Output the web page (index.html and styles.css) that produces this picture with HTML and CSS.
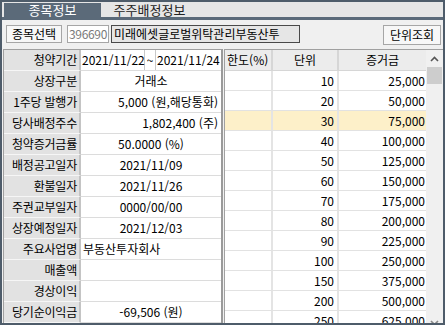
FILE: index.html
```html
<!DOCTYPE html>
<html lang="ko">
<head>
    <meta charset="UTF-8">
    <title>종목정보</title>
    <link rel="stylesheet" href="styles.css">
</head>
<body>
    <div class="window">
        <div class="tabs">
            <div class="tab active">종목정보</div>
            <div class="tab">주주배정정보</div>
        </div>

        <div class="content">
            <div class="toolbar">
                <button class="btn">종목선택</button>
                <div class="code-box">396690</div>
                <div class="name-box">미래에셋글로벌위탁관리부동산투</div>
                <div class="spacer"></div>
                <button class="btn btn-unit">단위조회</button>
            </div>

            <div class="panes">
                <div class="info">
                    <div class="label">청약기간</div>
                    <div class="value period">
                        <span class="left">2021/11/22</span>
                        <span class="tilde">~</span>
                        <span class="left">2021/11/24</span>
                    </div>
                    <div class="label">상장구분</div>
                    <div class="value center">거래소</div>
                    <div class="label">1주당 발행가</div>
                    <div class="value right">5,000 (원,해당통화)</div>
                    <div class="label">당사배정주수</div>
                    <div class="value right">1,802,400 (주)</div>
                    <div class="label">청약증거금률</div>
                    <div class="value center">50.0000 (%)</div>
                    <div class="label">배정공고일자</div>
                    <div class="value center">2021/11/09</div>
                    <div class="label">환불일자</div>
                    <div class="value center">2021/11/26</div>
                    <div class="label">주권교부일자</div>
                    <div class="value center">0000/00/00</div>
                    <div class="label">상장예정일자</div>
                    <div class="value center">2021/12/03</div>
                    <div class="label">주요사업명</div>
                    <div class="value left">부동산투자회사</div>
                    <div class="label">매출액</div>
                    <div class="value"></div>
                    <div class="label">경상이익</div>
                    <div class="value"></div>
                    <div class="label">당기순이익금</div>
                    <div class="value center">-69,506 (원)</div>
                </div>

                <div class="units">
                    <div class="unit-table" id="unitTable">
                        <div class="row head">
                            <div class="cell c1">한도(%)</div>
                            <div class="cell c2">단위</div>
                            <div class="cell c3">증거금</div>
                        </div>
                        <!-- rows added by script -->
                    </div>
                    <div class="scrollbar">
                        <div class="arrow">
                            <svg width="9" height="6" viewBox="0 0 9 6"><path d="M1 5 L4.5 1.5 L8 5" fill="none" stroke="#555" stroke-width="1.6"/></svg>
                        </div>
                        <div class="thumb"></div>
                        <div class="track"></div>
                        <div class="arrow">
                            <svg width="9" height="6" viewBox="0 0 9 6"><path d="M1 1 L4.5 4.5 L8 1" fill="none" stroke="#888" stroke-width="1.6"/></svg>
                        </div>
                    </div>
                </div>
            </div>
        </div>
    </div>

    <script>
        // unit / deposit rows
        const units = [10, 20, 30, 40, 50, 60, 70, 80, 90, 100, 150, 200, 250];
        const table = document.getElementById('unitTable');

        units.forEach(unit => {
            const row = document.createElement('div');
            row.className = 'row';
            if (unit === 30) {
                row.classList.add('selected');
            }
            const deposit = (unit * 2500).toLocaleString('en-US');
            row.innerHTML =
                '<div class="cell c1"></div>' +
                '<div class="cell c2 num">' + unit + '</div>' +
                '<div class="cell c3 num">' + deposit + '</div>';
            table.appendChild(row);
        });
    </script>
</body>
</html>
```

FILE: styles.css
```css
* {
    box-sizing: border-box;
    margin: 0;
    padding: 0;
}

body {
    font-family: 'Noto Sans CJK KR', 'Noto Sans', sans-serif;
    font-size: 12px;
    color: #000;
    background-color: #f0f0f0;
}

.window {
    width: 445px;
    height: 325px;
    border: 2px solid #4e5c6a;
    background-color: #f0f0f0;
    display: flex;
    flex-direction: column;
    overflow: hidden;
}

/* tabs */
.tabs {
    display: flex;
    height: 18px;
    padding: 1px 0 0 2px;
    background-color: #e6e6e6;
    border-bottom: 3px solid #5b6a79;
}

.tab {
    width: 97px;
    height: 14px;
    line-height: 14px;
    text-align: center;
    font-size: 13px;
    color: #222;
}

.tab.active {
    background-color: #5b6a79;
    color: #fff;
}

/* toolbar */
.content {
    flex: 1;
    display: flex;
    flex-direction: column;
    padding-left: 1px;
}

.toolbar {
    display: flex;
    align-items: flex-start;
    margin: 5px 2px 0 3px;
    height: 24px;
}

.btn {
    font-family: inherit;
    font-size: 12px;
    height: 18px;
    padding: 0 4px;
    background-color: #f7f7f7;
    border: 1px solid #a6a6a6;
    color: #000;
    line-height: 16px;
}

.btn:first-child {
    width: 56px;
}

.btn-unit {
    width: 58px;
    height: 20px;
}

.code-box {
    width: 42px;
    height: 18px;
    margin-left: 5px;
    border: 1px solid #a6a6a6;
    background-color: #fff;
    color: #7a7a7a;
    line-height: 16px;
    text-align: center;
    letter-spacing: -0.3px;
}

.name-box {
    width: 189px;
    height: 18px;
    margin-left: 2px;
    border: 1px solid #4a4a4a;
    background-color: #e6e6e6;
    line-height: 16px;
    padding-left: 2px;
    white-space: nowrap;
    overflow: hidden;
}

.spacer {
    flex: 1;
}

/* panes */
.panes {
    display: flex;
    flex: 1;
    min-height: 0;
}

.info {
    width: 220px;
    border: 1px solid #a0a0a0;
    border-right: 2px solid #9a9a9a;
    display: grid;
    grid-template-columns: 77px 1fr;
    grid-auto-rows: 21px;
    background-color: #fff;
}

.label {
    background-color: #e2e2e2;
    border-bottom: 1px solid #f6f6f6;
    border-right: 2px solid #c4c4c4;
    text-align: right;
    padding-right: 2px;
    line-height: 20px;
    white-space: nowrap;
    letter-spacing: -0.2px;
}

.value {
    border-bottom: 1px solid #dcdcdc;
    line-height: 20px;
    white-space: nowrap;
}

.value.center {
    text-align: center;
}

.value.right {
    text-align: right;
    padding-right: 3px;
}

.value.left {
    padding-left: 2px;
}

.period {
    display: grid;
    grid-template-columns: 63px 10px 1fr;
    gap: 1px;
    background-color: #c8c8c8;
}

.period span {
    background-color: #fff;
}

.period .left {
    padding-left: 1px;
}

.period .tilde {
    text-align: center;
}

/* unit table */
.units {
    flex: 1;
    display: flex;
    margin-left: 1px;
    border-top: 1px solid #a0a0a0;
    border-left: 1px solid #a0a0a0;
    border-bottom: 1px solid #a0a0a0;
    background-color: #fff;
    overflow: hidden;
}

.unit-table {
    width: 201px;
    overflow: hidden;
}

.row {
    display: flex;
    height: 20px;
    border-bottom: 1px solid #e2e2e2;
}

.row.head {
    background-color: #ececec;
    border-bottom: 1px solid #d6d6d6;
    height: 21px;
}

.row.selected {
    background-color: #fdf0c9;
}

.cell {
    line-height: 19px;
    border-right: 2px solid #e4e4e4;
    white-space: nowrap;
}

.head .cell {
    line-height: 20px;
    text-align: center;
    border-right-color: #d6d6d6;
}

.c1 {
    width: 48px;
}

.head .c1 {
    text-align: left;
    padding-left: 2px;
}

.c2 {
    width: 66px;
}

.c3 {
    width: 87px;
    border-right: none;
}

.num {
    text-align: right;
    padding-right: 3px;
}

.c3.num {
    padding-right: 1px;
}

.scrollbar {
    width: 17px;
    display: flex;
    flex-direction: column;
    background-color: #f0f0f0;
}

.arrow {
    height: 17px;
    display: flex;
    align-items: center;
    justify-content: center;
}

.thumb {
    height: 17px;
    margin: 0 1px;
    background-color: #cdcdcd;
}

.track {
    flex: 1;
}
```
